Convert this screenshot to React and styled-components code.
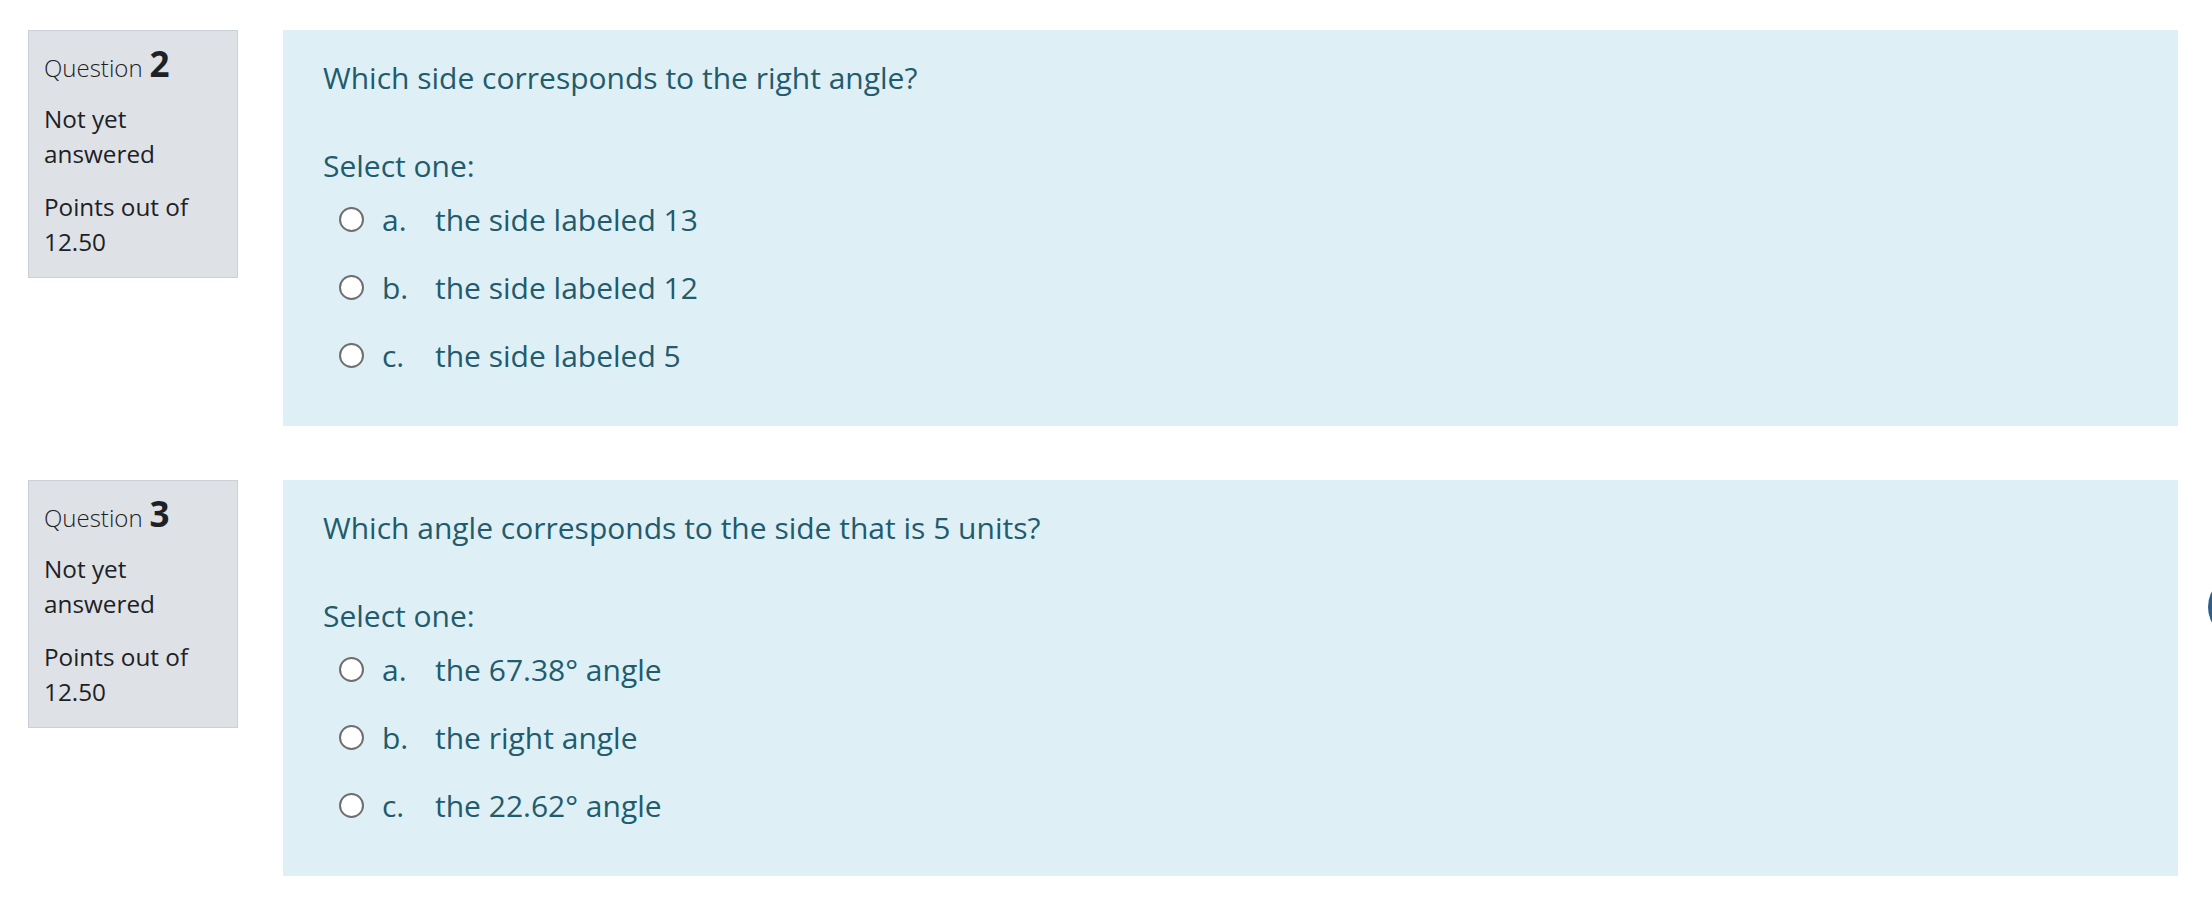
import React from "react"
import styled, {createGlobalStyle} from 'styled-components'

const GlobalStyle = createGlobalStyle`
    html, body {
        margin: 0;
        padding: 0;
        background: #ffffff;
        font-family: "Open Sans", "Liberation Sans", sans-serif;
    }
`
const Page = styled.div`
    padding: 30px 34px 0 28px;
`
const Question = styled.div`
    display: flex;
    align-items: flex-start;
    gap: 45px;
    margin-bottom: 54px;
`
const Info = styled.div`
    box-sizing: border-box;
    flex: 0 0 210px;
    background-color: #dee2e6;
    border: 1px solid #cad0d7;
    padding: 12px 15px 17px 15px;
    color: #1d2125;
    font-size: 24.3px;
    line-height: 35.4px;
`
const Title = styled.h3`
    display: flex;
    align-items: baseline;
    gap: 7px;
    margin: 0 0 16px;
    font-size: 24px;
    font-weight: 300;
    line-height: 1.2;
`
const Number = styled.span`
    font-size: 35px;
    font-weight: 700;
    line-height: 1.2;
`
const State = styled.div`
    & + & {
        margin-top: 17px;
    }
`
const Formulation = styled.div`
    box-sizing: border-box;
    flex: 1;
    height: 396px;
    background-color: #def0f6;
    color: #225b6c;
    font-size: 30px;
    line-height: 45px;
    padding: 25px 40px 48px 40px;
`
const QText = styled.div`
    margin-bottom: 43px;
`
const Prompt = styled.div`
    margin-bottom: 9px;
`
const Options = styled.div`
    display: flex;
    flex-direction: column;
    gap: 23px;
    padding-left: 16px;
`
const Option = styled.label`
    display: flex;
    align-items: center;
    height: 45px;
`
const Radio = styled.span`
    box-sizing: border-box;
    width: 25px;
    height: 25px;
    border-radius: 50%;
    border: 2px solid #6f6f6f;
    background: #ffffff;
    margin-right: 18px;
    flex: 0 0 auto;
`
const Letter = styled.span`
    width: 53px;
    flex: 0 0 53px;
`
const FloatButton = styled.div`
    position: fixed;
    top: 574px;
    right: -62px;
    width: 66px;
    height: 66px;
    border-radius: 50%;
    background-color: #2f5e8d;
`

const questions = [
    {
        no: 2,
        text: 'Which side corresponds to the right angle?',
        answers: ['the side labeled 13', 'the side labeled 12', 'the side labeled 5'],
    },
    {
        no: 3,
        text: 'Which angle corresponds to the side that is 5 units?',
        answers: ['the 67.38° angle', 'the right angle', 'the 22.62° angle'],
    },
]

const letters = ['a.', 'b.', 'c.']

const App = () => (
    <>
        <GlobalStyle />
        <Page>
            {questions.map(q => (
                <Question key={q.no}>
                    <Info>
                        <Title>Question <Number>{q.no}</Number></Title>
                        <State>Not yet answered</State>
                        <State>Points out of 12.50</State>
                    </Info>
                    <Formulation>
                        <QText>{q.text}</QText>
                        <Prompt>Select one:</Prompt>
                        <Options>
                            {q.answers.map((a, i) => (
                                <Option key={a}>
                                    <Radio />
                                    <Letter>{letters[i]}</Letter>
                                    <span>{a}</span>
                                </Option>
                            ))}
                        </Options>
                    </Formulation>
                </Question>
            ))}
        </Page>
        <FloatButton />
    </>
)

export default App
